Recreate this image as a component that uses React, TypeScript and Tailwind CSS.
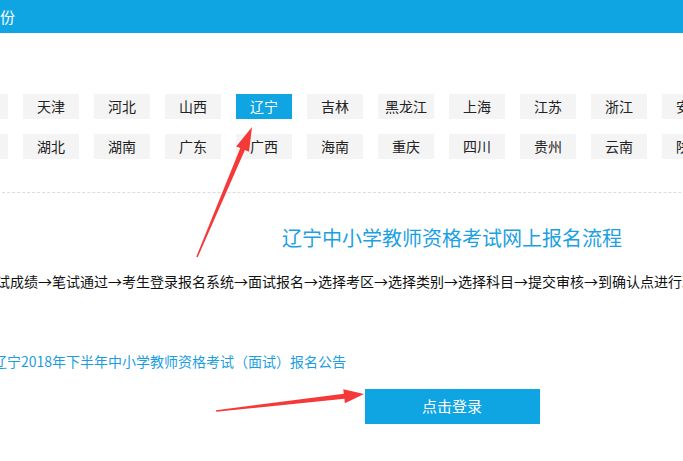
import React from "react";

const row1 = ["北京", "天津", "河北", "山西", "辽宁", "吉林", "黑龙江", "上海", "江苏", "浙江", "安徽", "福建", "江西", "山东"];
const row2 = ["河南", "湖北", "湖南", "广东", "广西", "海南", "重庆", "四川", "贵州", "云南", "陕西", "甘肃", "青海", "宁夏"];

function Tag({ name }: { name: string }) {
  const active = name === "辽宁";
  return (
    <div
      className={`w-[56px] h-[25px] shrink-0 flex items-center justify-center text-[14px] ${
        active ? "bg-[#0ea5e2] text-white" : "bg-[#f4f4f4] text-[#222]"
      }`}
    >
      {name}
    </div>
  );
}

export default function App() {
  return (
    <div className="relative w-[683px] h-[461px] overflow-hidden bg-white font-['Noto_Sans_CJK_SC',sans-serif]">
      <div className="w-[1000px] -ml-[48px]">
        {/* header */}
        <div className="h-[33px] bg-[#0ea5e2] flex items-center pl-[3px]">
          <span className="text-white text-[15px] leading-none">选择省份</span>
        </div>

        {/* provinces */}
        <div className="mt-[61px] flex flex-col gap-[15px]">
          <div className="flex gap-[15px]">
            {row1.map((p) => (
              <Tag key={p} name={p} />
            ))}
          </div>
          <div className="flex gap-[15px]">
            {row2.map((p) => (
              <Tag key={p} name={p} />
            ))}
          </div>
        </div>

        <div className="mt-[33px] border-t border-dashed border-[#dcdcdc]" />

        <h2 className="mt-[33px] text-center text-[20px] leading-[24px] text-[#1ba1e2]">
          辽宁中小学教师资格考试网上报名流程
        </h2>

        <p className="mt-[21px] pl-[2px] text-[14px] leading-[20px] text-[#111] whitespace-nowrap">
          查询笔试成绩→笔试通过→考生登录报名系统→面试报名→选择考区→选择类别→选择科目→提交审核→到确认点进行现场确认→网上缴费→打印准考证
        </p>

        <p className="mt-[60px] pl-[41px] text-[14px] leading-[20px] text-[#1a9ee0] whitespace-nowrap">
          辽宁2018年下半年中小学教师资格考试（面试）报名公告
        </p>

        <button className="mt-[18px] mx-auto block w-[175px] h-[35px] bg-[#0ea5e2] text-white text-[15px]">
          点击登录
        </button>
      </div>

      {/* red annotation arrows */}
      <svg className="absolute left-0 top-0 pointer-events-none" width="683" height="461" viewBox="0 0 683 461">
        <polygon
          fill="#f53838"
          points="196.3,256.7 197.7,257.3 244.9,150.1 249,151.8 252,127 236.2,146.4 240.3,148.1"
        />
        <polygon
          fill="#f53838"
          points="216.1,410.2 216.1,411.8 344.4,398.8 344.9,403.3 364,394 343.3,389.3 343.8,393.8"
        />
      </svg>
    </div>
  );
}
